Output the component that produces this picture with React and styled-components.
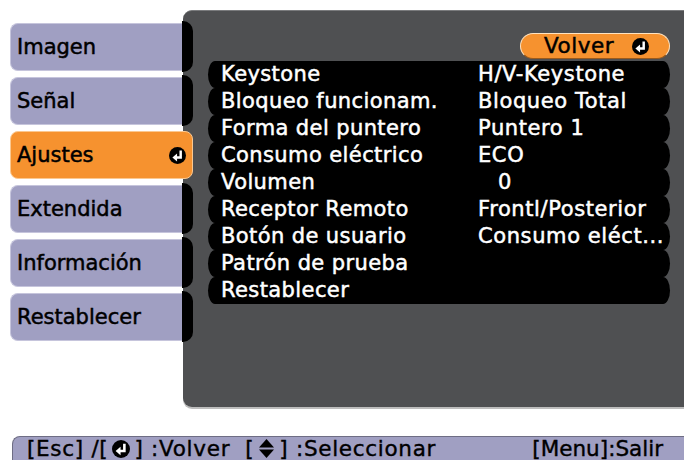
import React from 'react'
import styled, { createGlobalStyle } from 'styled-components'

const GlobalStyle = createGlobalStyle`
  html, body {
    margin: 0;
    padding: 0;
    background: #FFFFFF;
  }
  body {
    font-family: "DejaVu Sans", "Liberation Sans", sans-serif;
    width: 684px;
    height: 460px;
    overflow: hidden;
  }
`

const ORANGE = '#F6922F'
const LAVENDER = '#A09FC2'

const Screen = styled.div`
  width: 684px;
  height: 460px;
  display: flex;
  flex-direction: column;
`

const Main = styled.div`
  display: flex;
  height: 410px;
`

const TabList = styled.ul`
  list-style: none;
  margin: 0;
  padding: 23px 0 0 10px;
  flex: 0 0 173px;
  min-width: 0;
  display: flex;
  flex-direction: column;
  gap: 6px;
  position: relative;
  z-index: 1;
`

const Tab = styled.li`
  display: flex;
  flex: 0 0 48px;
  width: 183px;
  height: 48px;
`

const TabFace = styled.div`
  flex: 1;
  display: flex;
  align-items: center;
  justify-content: space-between;
  box-sizing: border-box;
  padding: 0 6px 0 6px;
  font-size: 21px;
  color: #000;
  -webkit-text-stroke: 0.5px #000;
  background: ${props => (props.active ? ORANGE : LAVENDER)};
  border: 1px solid ${props => (props.active ? '#FBC890' : '#C6C5DC')};
  border-right: ${props => (props.active ? '1px solid #FBC890' : 'none')};
  border-radius: ${props => (props.active ? '8px' : '8px 0 0 8px')};
`

const TabNub = styled.div`
  flex: 0 0 11px;
  margin: -2px 0 -1px;
  background: #000;
  border-radius: 0 10px 10px 0;
`

const Panel = styled.section`
  flex: 1;
  margin-top: 10px;
  height: 397px;
  box-sizing: border-box;
  background: #4F5052;
  border-top: 1px solid #7A7B7D;
  border-radius: 9px 0 0 9px;
  box-shadow: 0 2px 0 #BDBDBD;
  padding: 22px 14px 0 25px;
  display: flex;
  flex-direction: column;
`

const BackRow = styled.div`
  display: flex;
  justify-content: flex-end;
  margin-bottom: 2px;
`

const BackButton = styled.div`
  width: 150px;
  height: 26px;
  box-sizing: border-box;
  display: flex;
  align-items: center;
  justify-content: flex-end;
  gap: 18px;
  padding-right: 20px;
  background: ${ORANGE};
  border: 1px solid #FFE3C0;
  border-bottom-color: #9A5A1C;
  border-radius: 13px;
  font-size: 21.5px;
  letter-spacing: 0.5px;
  line-height: 26px;
  color: #000;
  -webkit-text-stroke: 0.5px #000;
`

const Rows = styled.ul`
  list-style: none;
  margin: 0;
  padding: 0;
  display: flex;
  flex-direction: column;
`

const Row = styled.li`
  display: grid;
  grid-template-columns: 257px 1fr;
  height: 27px;
  align-items: center;
  padding-left: 13px;
  background: #000;
  border-radius: 7px / 13.5px;
  font-size: 21px;
  line-height: 27px;
  color: #FFF;
  -webkit-text-stroke: 0.5px #FFF;
  white-space: nowrap;
`

const Label = styled.span`
  letter-spacing: 0.4px;
`

const Value = styled.span`
  letter-spacing: 0.6px;
  padding-left: ${props => (props.indent ? '20px' : '0')};
`

const Footer = styled.footer`
  margin: 26px 0 0 12px;
  height: 24px;
  box-sizing: border-box;
  display: flex;
  align-items: center;
  justify-content: space-between;
  padding: 0 21px 0 14px;
  background: ${LAVENDER};
  border: 1px solid #6E6D84;
  border-right: none;
  border-bottom: none;
  border-radius: 8px 0 0 0;
  font-size: 21.5px;
  line-height: 24px;
  color: #000;
  -webkit-text-stroke: 0.4px #000;
  white-space: pre;
`

const Hint = styled.span`
  display: flex;
  align-items: center;
  letter-spacing: ${props => (props.wide ? '0.7px' : '0')};

  svg {
    margin: 0 4px;
  }
`

const EnterIcon = ({ size = 17 }) => (
  <svg width={size} height={size} viewBox="0 0 16 16">
    <circle cx="8" cy="8" r="8" fill="#000" />
    <path d="M11 3.4 V9.8 H6.5" stroke="#FFF" strokeWidth="2.3" fill="none" />
    <path d="M7.6 6 L3.2 9.8 L7.6 13.6 Z" fill="#FFF" />
  </svg>
)

const UpDownIcon = () => (
  <svg width="17" height="21" viewBox="0 0 17 21">
    <path d="M8.5 1 L16 9.5 H1 Z" fill="#000" />
    <path d="M1 11.5 H16 L8.5 20 Z" fill="#000" />
  </svg>
)

const tabs = [
  { label: 'Imagen' },
  { label: 'Señal' },
  { label: 'Ajustes', active: true },
  { label: 'Extendida' },
  { label: 'Información' },
  { label: 'Restablecer' },
]

const settings = [
  { label: 'Keystone', value: 'H/V-Keystone' },
  { label: 'Bloqueo funcionam.', value: 'Bloqueo Total' },
  { label: 'Forma del puntero', value: 'Puntero 1' },
  { label: 'Consumo eléctrico', value: 'ECO' },
  { label: 'Volumen', value: '0', indent: true },
  { label: 'Receptor Remoto', value: 'Frontl/Posterior' },
  { label: 'Botón de usuario', value: 'Consumo eléct...' },
  { label: 'Patrón de prueba', value: '' },
  { label: 'Restablecer', value: '' },
]

export default function App() {
  return (
    <Screen>
      <GlobalStyle />
      <Main>
        <TabList>
          {tabs.map(tab => (
            <Tab key={tab.label}>
              <TabFace active={tab.active}>
                {tab.label}
                {tab.active && <EnterIcon />}
              </TabFace>
              {!tab.active && <TabNub />}
            </Tab>
          ))}
        </TabList>
        <Panel>
          <BackRow>
            <BackButton>
              Volver
              <EnterIcon />
            </BackButton>
          </BackRow>
          <Rows>
            {settings.map(item => (
              <Row key={item.label}>
                <Label>{item.label}</Label>
                <Value indent={item.indent}>{item.value}</Value>
              </Row>
            ))}
          </Rows>
        </Panel>
      </Main>
      <Footer>
        <Hint wide>
          {'[Esc] /['}
          <EnterIcon size={18} />
          {'] :Volver  ['}
          <UpDownIcon />
          {'] :Seleccionar'}
        </Hint>
        <Hint>[Menu]:Salir</Hint>
      </Footer>
    </Screen>
  )
}
